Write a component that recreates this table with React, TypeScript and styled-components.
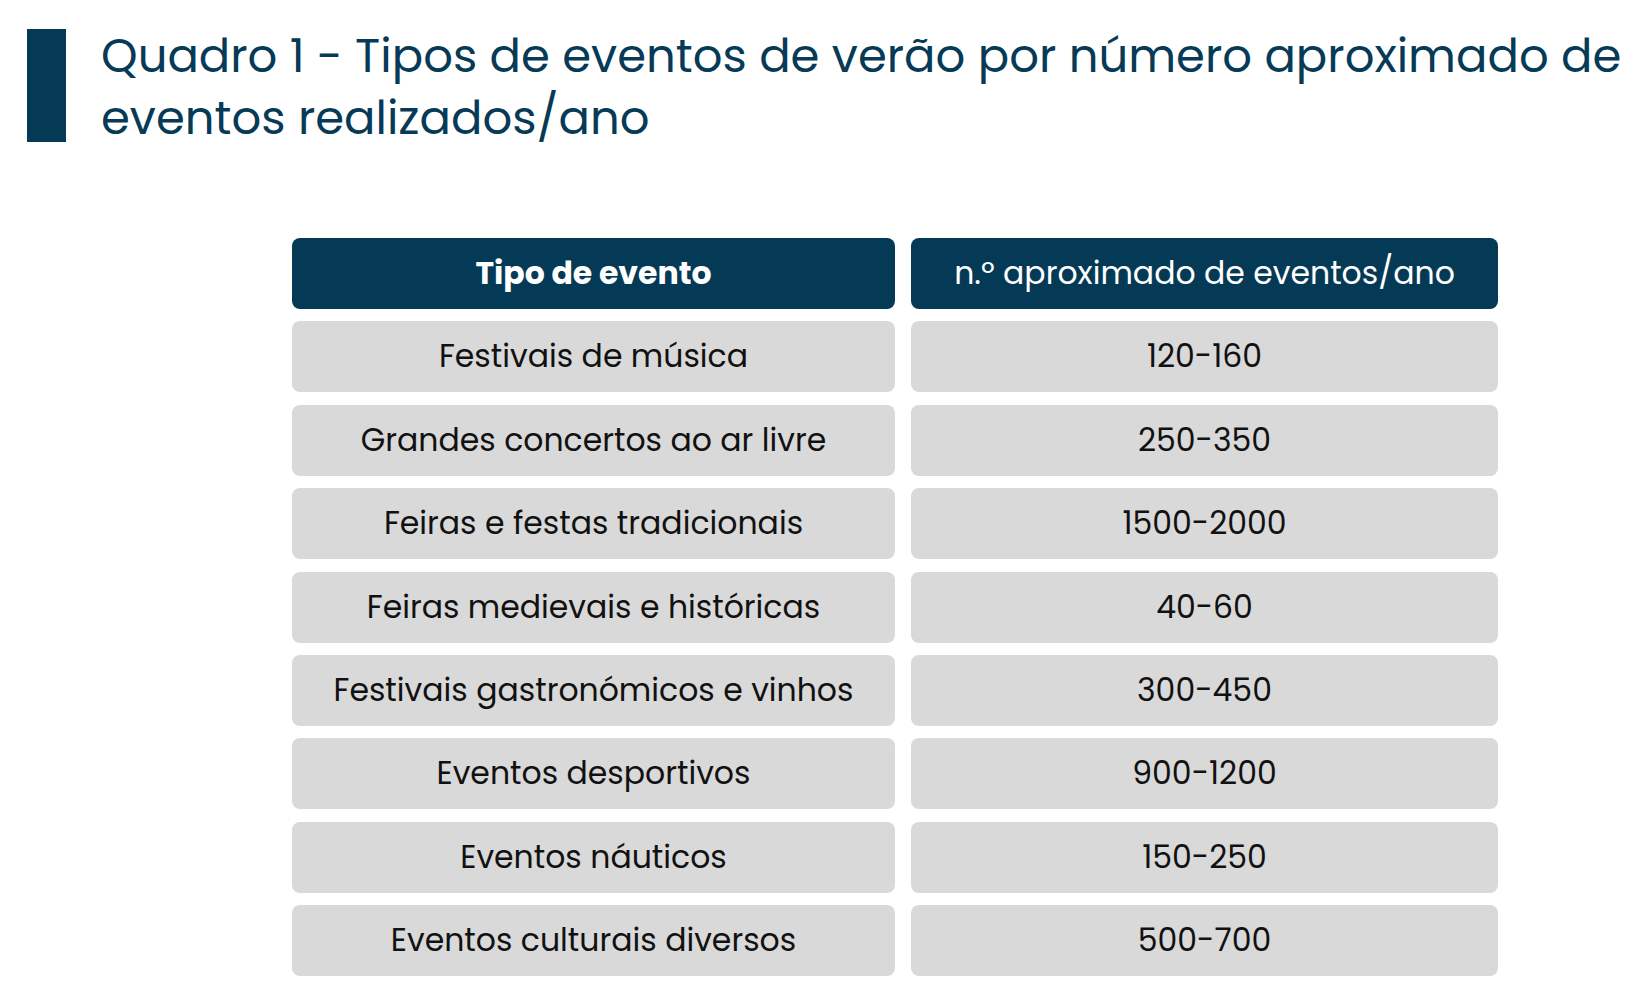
import React from "react";
import styled, { createGlobalStyle } from "styled-components";

interface CellProps {
  $bold?: boolean
}

const rows: [string, string][] = [
  ["Festivais de música", "120-160"],
  ["Grandes concertos ao ar livre", "250-350"],
  ["Feiras e festas tradicionais", "1500-2000"],
  ["Feiras medievais e históricas", "40-60"],
  ["Festivais gastronómicos e vinhos", "300-450"],
  ["Eventos desportivos", "900-1200"],
  ["Eventos náuticos", "150-250"],
  ["Eventos culturais diversos", "500-700"],
];

const App: React.FC = (): React.ReactElement => {
  return (
    <Page>
      <GlobalStyle />
      <TitleBlock>
        <TitleBar />
        <Title>
          Quadro 1 - Tipos de eventos de verão por número aproximado de
          <br />
          eventos realizados/ano
        </Title>
      </TitleBlock>
      <Table>
        <HeadCell $bold>Tipo de evento</HeadCell>
        <HeadCell>n.º aproximado de eventos/ano</HeadCell>
        {rows.map(([name, count]) => (
          <React.Fragment key={name}>
            <BodyCell>{name}</BodyCell>
            <BodyCell>{count}</BodyCell>
          </React.Fragment>
        ))}
      </Table>
    </Page>
  );
};

const GlobalStyle = createGlobalStyle`
  html, body {
    margin: 0;
    padding: 0;
    background: #ffffff;
  }
  body {
    font-family: "Poppins", Inter, "Noto Sans", sans-serif;
  }
`;

const Page = styled.main`
  width: 1635px;
  height: 997px;
  padding: 29px 0 0 27px;
  box-sizing: border-box;
  overflow: hidden;
`;

const TitleBlock = styled.header`
  display: flex;
  align-items: flex-start;
  gap: 35px;
  height: 120px;
`;

const TitleBar = styled.div`
  flex: none;
  width: 39px;
  height: 113px;
  background-color: #053a57;
`;

const Title = styled.h1`
  margin: -4px 0 0 0;
  font-size: 46.5px;
  font-weight: 400;
  line-height: 62px;
  color: #063a56;
  white-space: nowrap;
`;

const Table = styled.section`
  display: grid;
  grid-template-columns: 603px 587px;
  grid-auto-rows: 71px;
  column-gap: 16px;
  row-gap: 12.4px;
  margin: 89px 0 0 265px;
`;

const HeadCell = styled.div<CellProps>`
  display: flex;
  align-items: center;
  justify-content: center;
  border-radius: 8px;
  background-color: #053a57;
  color: #ffffff;
  font-size: 31.5px;
  font-weight: ${({ $bold }) => ($bold ? 700 : 400)};
`;

const BodyCell = styled.div`
  display: flex;
  align-items: center;
  justify-content: center;
  border-radius: 8px;
  background-color: #d9d9d9;
  color: #111111;
  font-size: 31.5px;
`;

export default App;
